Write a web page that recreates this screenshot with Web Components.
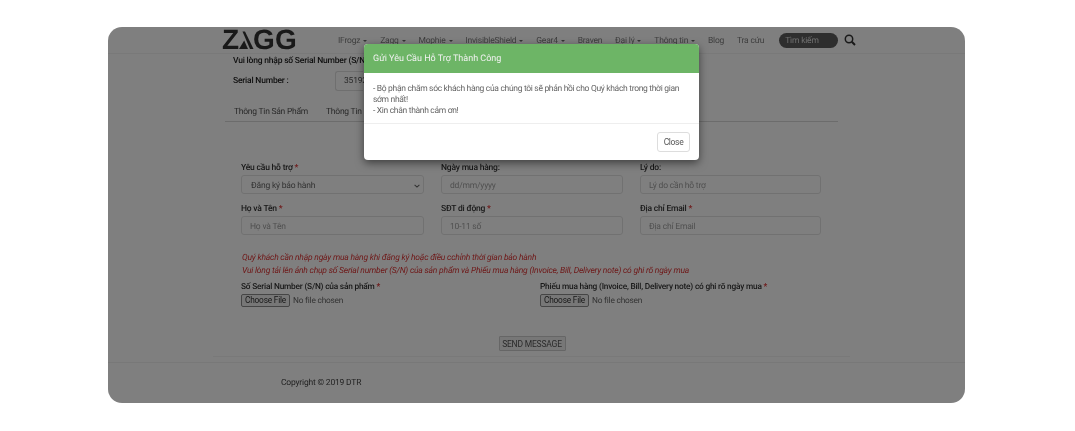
<!DOCTYPE html>
<html lang="vi">
<head>
<meta charset="utf-8">
<title>ZAGG</title>
<style>
    html, body{ margin:0; height:100%; background:#fff; }
    body{ font-family:Roboto, "Noto Sans", sans-serif; overflow:hidden; letter-spacing:-.2px; text-rendering:geometricPrecision; }
</style>
</head>
<body>
<support-page>
    <site-nav slot="nav"></site-nav>
    <serial-box slot="serial"></serial-box>
    <info-tabs slot="tabs"></info-tabs>
    <support-form slot="form"></support-form>
    <site-footer slot="footer"></site-footer>
    <success-modal slot="modal"></success-modal>
</support-page>
<script>
class SupportPage extends HTMLElement {
    constructor(){
        super();
        this.attachShadow({mode:'open'});
        this.shadowRoot.innerHTML = `
        <style>
            :host{ display:block; padding:27px 110px 0 108px; }
            .win{
                position:relative;
                height:376px;
                background:#fff;
                border-radius:14px;
                overflow:hidden;
                display:flex;
                flex-direction:column;
                filter:blur(.7px);
            }
            .main{ padding:0 127px 0 117px; }
            .dim{ position:absolute; inset:0; background:rgba(0,0,0,.5); }
        </style>
        <div class="win">
            <slot name="nav"></slot>
            <div class="main">
                <slot name="serial"></slot>
                <slot name="tabs"></slot>
                <slot name="form"></slot>
            </div>
            <slot name="footer"></slot>
            <div class="dim"></div>
            <slot name="modal"></slot>
        </div>`;
    }
}

class SiteNav extends HTMLElement {
    constructor(){
        super();
        this.attachShadow({mode:'open'});
        const items = [['IFrogz',1],['Zagg',1],['Mophie',1],['InvisibleShield',1],['Gear4',1],['Braven',0],['Đại lý',1],['Thông tin',1],['Blog',0],['Tra cứu',0]];
        this.shadowRoot.innerHTML = `
        <style>
            :host{ display:block; }
            nav{
                height:27px;
                box-sizing:border-box;
                border-bottom:1px solid #f3f3f3;
                display:flex;
                align-items:center;
                padding-left:114px;
                font-size:8.5px;
                color:#7d7d7d;
            }
            .logo{
                display:flex;
                align-items:center;
                width:75px;
                height:22px;
                margin-right:41px;
                font:700 28px/22px "Liberation Sans", sans-serif;
                letter-spacing:0;
                color:#333;
            }
            .logo svg{ margin:0 -1px 0 0; }
            ul{ list-style:none; margin:2px 0 0; padding:0; display:flex; gap:12.8px; align-items:center; }
            li{ white-space:nowrap; display:flex; align-items:center; gap:3px; }
            .caret{ width:0; height:0; border:2px solid transparent; border-top-color:#666; border-bottom:0; }
            .search{
                margin-left:15px;
                width:59px;
                height:15px;
                line-height:16px;
                box-sizing:border-box;
                padding-left:6px;
                background:#5c5c5c;
                border-radius:8px;
                color:#ddd;
            }
            .glass{ margin-left:6px; display:block; }
        </style>
        <nav>
            <div class="logo"><span>Z</span><svg width="15" height="20" viewBox="0 0 15 20"><path d="M0 19L5.2 10.5L9 19Z" fill="#333"/><path d="M3.5 1.5L6 1.5L14.5 19L11 19Z" fill="#333"/></svg><span>GG</span></div>
            <ul>${items.map(i=>`<li>${i[0]}${i[1]?'<span class="caret"></span>':''}</li>`).join('')}</ul>
            <div class="search">Tìm kiếm</div>
            <svg class="glass" width="12" height="12" viewBox="0 0 12 12" fill="none" stroke="#333" stroke-width="1.5"><circle cx="5" cy="5" r="3.7"/><path d="M7.8 7.8L11 11" stroke-width="2"/></svg>
        </nav>`;
    }
}

class SerialBox extends HTMLElement {
    constructor(){
        super();
        this.attachShadow({mode:'open'});
        this.shadowRoot.innerHTML = `
        <style>
            :host{ display:block; padding-left:8px; font-size:8.5px; font-weight:500; color:#222; }
            h4{ margin:0; font:inherit; line-height:11px; padding-top:2px; }
            .row{ display:flex; align-items:center; margin-top:4px; }
            .row span{ width:102px; }
            .in{
                width:28px; height:20px; box-sizing:border-box;
                border:1px solid #dedede; border-right:0; border-radius:3px 0 0 3px;
                padding-left:8px; line-height:18px;
                font-weight:400; color:#555;
            }
        </style>
        <h4>Vui lòng nhập số Serial Number (S/N)</h4>
        <div class="row"><span>Serial Number :</span><div class="in">35192</div></div>`;
    }
}

class InfoTabs extends HTMLElement {
    constructor(){
        super();
        this.attachShadow({mode:'open'});
        this.shadowRoot.innerHTML = `
        <style>
            :host{ display:flex; gap:18px; margin-top:10px; padding:0 0 0 9px; height:20px; letter-spacing:-.25px;
                   border-bottom:1px solid #d8d8d8; font-size:8.5px; color:#555; line-height:22px; }
        </style>
        <span>Thông Tin Sản Phẩm</span><span>Thông Tin</span>`;
    }
}

class FormField extends HTMLElement {
    constructor(){
        super();
        this.attachShadow({mode:'open'});
        const req = this.hasAttribute('required') ? ' <b>*</b>' : '';
        const chevron = this.hasAttribute('select')
            ? '<svg width="6" height="4" viewBox="0 0 6 4" fill="none" stroke="#666" stroke-width="1.1"><path d="M.6 .8l2.4 2.3L5.4 .8"/></svg>' : '';
        this.shadowRoot.innerHTML = `
        <style>
            :host{ display:block; font-size:8.5px; }
            label{ display:block; font-weight:500; color:#333; line-height:13px; height:13px; }
            b{ color:#d33; font-weight:700; }
            .box{
                height:19px; box-sizing:border-box;
                border:1px solid #e2e2e2; border-radius:3px;
                display:flex; align-items:center; justify-content:space-between;
                padding:2px 3px 0 8px;
                color:#a0a0a0;
            }
            :host([select]) .box{ color:#666; padding-left:9px; }
        </style>
        <label>${this.getAttribute('label')}${req}</label>
        <div class="box"><span>${this.getAttribute('hint')}</span>${chevron}</div>`;
    }
}

class FileField extends HTMLElement {
    constructor(){
        super();
        this.attachShadow({mode:'open'});
        this.shadowRoot.innerHTML = `
        <style>
            :host{ display:block; font-size:8.3px; }
            label{ display:block; font-weight:500; color:#333; line-height:13px; height:13px; }
            b{ color:#d33; }
            .file{ display:flex; align-items:center; gap:3px; color:#666; }
            button{
                font:inherit; letter-spacing:inherit; color:#333;
                width:49px; height:13px; padding:0; line-height:11px;
                background:#efefef; border:1px solid #8a8a8a; border-radius:2px;
            }
        </style>
        <label>${this.getAttribute('label')} <b>*</b></label>
        <div class="file"><button>Choose File</button><span>No file chosen</span></div>`;
    }
}

class SupportForm extends HTMLElement {
    constructor(){
        super();
        this.attachShadow({mode:'open'});
        this.shadowRoot.innerHTML = `
        <style>
            :host{ display:block; padding:40px 0 0 16px; }
            .grid{ display:grid; grid-template-columns:183px 182px 181px; column-gap:17px; row-gap:9px; }
            .notes{ margin:17px 0 0 1px; font-size:8.5px; font-style:italic; color:#d33; line-height:12.5px; }
            .files{ display:grid; grid-template-columns:299px 1fr; margin-top:4px; }
            .send{ display:flex; justify-content:center; margin-top:29px; padding-right:15px; }
            button{
                font:inherit; font-size:8.5px; letter-spacing:inherit; color:#555; height:15px; width:67px; padding:0;
                background:#efefef; border:1px solid #ccc; border-radius:1px;
            }
            .rule{ height:1px; background:#f3f3f3; margin:5px -12px 0 -28px; }
        </style>
        <div class="grid">
            <form-field select required label="Yêu cầu hỗ trợ" hint="Đăng ký bảo hành"></form-field>
            <form-field label="Ngày mua hàng:" hint="dd/mm/yyyy"></form-field>
            <form-field label="Lý do:" hint="Lý do cần hỗ trợ"></form-field>
            <form-field required label="Họ và Tên" hint="Họ và Tên"></form-field>
            <form-field required label="SĐT di động" hint="10-11 số"></form-field>
            <form-field required label="Địa chỉ Email" hint="Địa chỉ Email"></form-field>
        </div>
        <div class="notes">
            Quý khách cần nhập ngày mua hàng khi đăng ký hoặc điều cchỉnh thời gian bảo hành<br>
            Vui lòng tải lên ảnh chụp số Serial number (S/N) của sản phẩm và Phiếu mua hàng (Invoice, Bill, Delivery note) có ghi rõ ngày mua
        </div>
        <div class="files">
            <file-field label="Số Serial Number (S/N) của sản phẩm"></file-field>
            <file-field label="Phiếu mua hàng (Invoice, Bill, Delivery note) có ghi rõ ngày mua"></file-field>
        </div>
        <div class="send"><button>SEND MESSAGE</button></div>
        <div class="rule"></div>`;
    }
}

class SiteFooter extends HTMLElement {
    constructor(){
        super();
        this.attachShadow({mode:'open'});
        this.shadowRoot.innerHTML = `
        <style>
            :host{ display:block; margin-top:5px; border-top:1px solid #f0f0f0; padding:15px 0 0 173px;
                   font-size:8.5px; color:#444; line-height:11px; }
        </style>
        Copyright © 2019 DTR`;
    }
}

class SuccessModal extends HTMLElement {
    constructor(){
        super();
        this.attachShadow({mode:'open'});
        this.shadowRoot.innerHTML = `
        <style>
            :host{
                position:absolute; left:256px; top:17px; width:335px;
                background:#fff; border-radius:4px; overflow:hidden;
                box-shadow:0 3px 9px rgba(0,0,0,.5);
                font-size:8.5px; color:#666; letter-spacing:-.32px;
            }
            header{ background:#6db566; color:#f2f2f2; height:29px; line-height:31px; padding-left:9px; font-size:9px; letter-spacing:0; }
            .body{ padding:11px 9px 6px; line-height:11px; height:33px; border-bottom:1px solid #eee; }
            footer{ display:flex; justify-content:flex-end; padding:8px 9px 8px; }
            button{ font:inherit; letter-spacing:inherit; color:#555; width:33px; height:20px; padding:0; background:#fff; border:1px solid #ddd; border-radius:3px; }
        </style>
        <header>Gửi Yêu Cầu Hỗ Trợ Thành Công</header>
        <div class="body">
            - Bộ phận chăm sóc khách hàng của chúng tôi sẽ phản hồi cho Quý khách trong thời gian<br>
            sớm nhất!<br>
            - Xin chân thành cảm ơn!
        </div>
        <footer><button>Close</button></footer>`;
    }
}

customElements.define('support-page', SupportPage);
customElements.define('site-nav', SiteNav);
customElements.define('serial-box', SerialBox);
customElements.define('info-tabs', InfoTabs);
customElements.define('form-field', FormField);
customElements.define('file-field', FileField);
customElements.define('support-form', SupportForm);
customElements.define('site-footer', SiteFooter);
customElements.define('success-modal', SuccessModal);
</script>
</body>
</html>
